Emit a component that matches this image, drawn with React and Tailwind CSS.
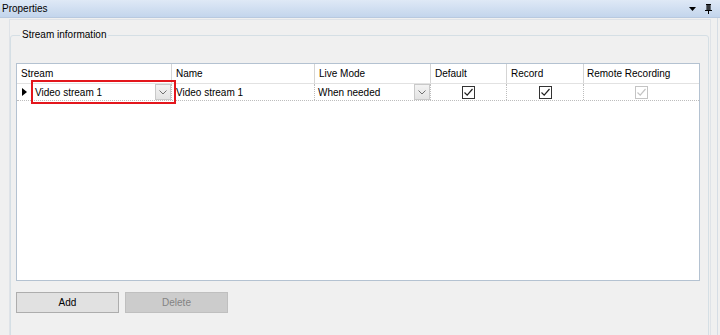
import React from "react";

const Check = ({ disabled }) => (
  <svg width="13" height="13" viewBox="0 0 13 13">
    <rect x="0.5" y="0.5" width="12" height="12" fill="#fff" stroke={disabled ? "#c4c4c4" : "#333"} />
    <path d="M2.5 6.5 L5.2 9.2 L10.5 3" fill="none" stroke={disabled ? "#c4c4c4" : "#222"} strokeWidth="1.2" />
  </svg>
);

const DropButton = () => (
  <div className="w-[16px] h-[16px] flex items-center justify-center border border-[#c9c9c9] bg-gradient-to-b from-[#f3f3f3] to-[#e3e3e3] shrink-0">
    <svg width="8" height="5" viewBox="0 0 8 5">
      <path d="M0.5 0.5 L4 4 L7.5 0.5" fill="none" stroke="#707070" strokeWidth="1" />
    </svg>
  </div>
);

export default function App() {
  return (
    <div
      className="w-[720px] h-[335px] bg-[#f0f0f0] overflow-hidden flex flex-col text-[10px] text-black"
      style={{ fontFamily: '"Liberation Sans", Arial, sans-serif' }}
    >
      {/* Title bar */}
      <div className="h-[18px] shrink-0 flex items-center justify-between pl-[2px] pr-[8px] bg-gradient-to-b from-[#dfe9f6] to-[#c3d5ec] border-b border-[#b8c9df]">
        <span className="leading-none">Properties</span>
        <div className="flex items-center gap-[9px]">
          <svg width="7" height="4" viewBox="0 0 7 4">
            <path d="M0 0 H7 L3.5 4 Z" fill="#000" />
          </svg>
          <svg width="7" height="10" viewBox="0 0 7 10">
            <path d="M1 0.5 H6 M2 0.5 V6 M5 0.5 V6 M3 0.5 V6 M4 0.5 V6 M0 6.5 H7 M3.5 6.5 V10" stroke="#000" strokeWidth="1" fill="none" />
          </svg>
        </div>
      </div>

      {/* Panel */}
      <div className="flex-1 w-[718px] border-r border-[#d6dde5] pt-[1px]">
        <div className="ml-[9px] w-[702px] h-full border-t border-l border-r border-[#dfe3e8]">
          <fieldset className="mt-[9px] mr-[1px] h-[400px] border border-[#d5dfe5] rounded-[3px] pl-[5px] pt-[22px]">
            <legend className="ml-[4px] px-[2px] leading-[12px]">Stream information</legend>

            {/* Grid */}
            <div className="w-[684px] h-[218px] bg-white border border-[#b4c2d1]">
              {/* Header */}
              <div className="flex h-[20px] border-b border-[#e2e2e2]">
                <div className="w-[155px] flex items-center pl-[4px] border-r border-[#d5d5d5]">Stream</div>
                <div className="w-[143px] flex items-center pl-[4px] border-r border-[#d5d5d5]">Name</div>
                <div className="w-[116px] flex items-center pl-[4px] border-r border-[#d5d5d5]">Live Mode</div>
                <div className="w-[76px] flex items-center pl-[4px] border-r border-[#d5d5d5]">Default</div>
                <div className="w-[77px] flex items-center pl-[4px] border-r border-[#d5d5d5]">Record</div>
                <div className="w-[115px] flex items-center pl-[3px]">Remote Recording</div>
              </div>

              {/* Row */}
              <div className="relative flex h-[17px] border-b border-dotted border-[#bdbdbd]">
                <div className="w-[14px] flex items-center justify-center">
                  <svg width="5" height="8" viewBox="0 0 5 8">
                    <path d="M0 0 L5 4 L0 8 Z" fill="#000" />
                  </svg>
                </div>
                <div className="w-[141px] flex items-center justify-between pl-[4px] border-r border-dotted border-[#bdbdbd]">
                  <span>Video stream 1</span>
                  <DropButton />
                </div>
                <div className="w-[143px] flex items-center pl-[4px] border-r border-dotted border-[#bdbdbd]">Video stream 1</div>
                <div className="w-[116px] flex items-center justify-between pl-[3px] border-r border-dotted border-[#bdbdbd]">
                  <span>When needed</span>
                  <DropButton />
                </div>
                <div className="w-[76px] flex items-center justify-center border-r border-dotted border-[#bdbdbd]">
                  <Check />
                </div>
                <div className="w-[77px] flex items-center justify-center border-r border-dotted border-[#bdbdbd]">
                  <Check />
                </div>
                <div className="w-[115px] flex items-center justify-center">
                  <Check disabled />
                </div>

                {/* Annotation */}
                <div className="absolute left-[14px] top-[-4px] w-[145px] h-[24px] border-2 border-[#e3161c] pointer-events-none" />
              </div>
            </div>

            {/* Buttons */}
            <div className="flex gap-[6px] mt-[11px]">
              <button className="w-[103px] h-[21px] bg-[#e1e1e1] border border-[#adadad] text-black">Add</button>
              <button className="w-[103px] h-[21px] bg-[#cccccc] border border-[#bfbfbf] text-[#838383]" disabled>
                Delete
              </button>
            </div>
          </fieldset>
        </div>
      </div>
    </div>
  );
}
